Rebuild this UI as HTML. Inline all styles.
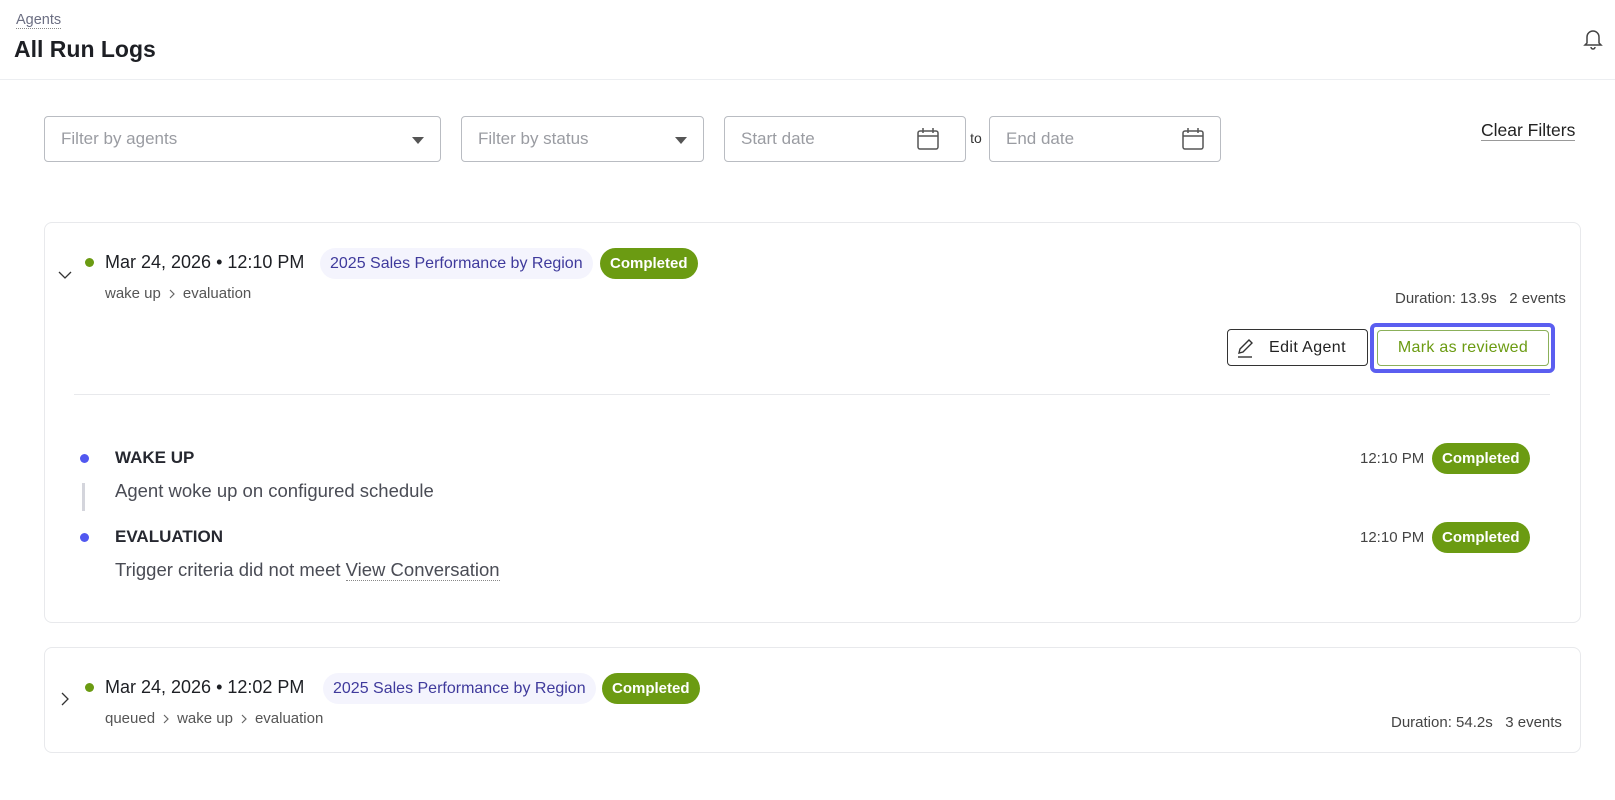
<!DOCTYPE html>
<html><head><meta charset="utf-8"><style>
*{box-sizing:border-box;margin:0;padding:0}
body{width:1615px;height:800px;background:#fff;font-family:"Liberation Sans",sans-serif;color:#222;position:relative;overflow:hidden}
.a{position:absolute}
.hdr{left:0;top:0;width:1615px;height:80px;border-bottom:1px solid #eceef1}
.inp{height:46px;border:1px solid #b9bcc2;border-radius:4px;top:116px;color:#9a9ca2;font-size:17px;padding:12px 16px}
.tri{position:absolute;right:16px;top:20px;width:0;height:0;border-left:6px solid transparent;border-right:6px solid transparent;border-top:7px solid #555}
.card{left:44px;width:1537px;border:1px solid #e8e9ec;border-radius:8px}
.pill{height:31px;border-radius:16px;padding:0 10px;line-height:31px;font-size:16px}
.tag{background:#f4f4fd;color:#3f3a9c}
.ok{background:#6b9b12;color:#fff;font-weight:bold;font-size:15px;padding:0 10px}
.sm{font-size:15px;color:#555}
.dot{width:9px;height:9px;border-radius:50%}
.chev{display:inline-block;margin:0 8px;vertical-align:middle}
</style></head><body>
<div class="a hdr"></div>
<div class="a" style="left:16px;top:12px;font-size:14.5px;color:#6b6e82;border-bottom:1px dotted #888;line-height:16px">Agents</div>
<div class="a" style="left:14px;top:36px;font-size:23px;font-weight:bold;color:#1d1f24">All Run Logs</div>
<svg class="a" style="left:1583px;top:28px" width="20" height="22" viewBox="0 0 20 22" fill="none" stroke="#444" stroke-width="1.5"><path d="M4 15V9a6 6 0 0 1 12 0v6l2 2H2z"/><path d="M8 19a2 2 0 0 0 4 0"/></svg>

<div class="a inp" style="left:44px;width:397px">Filter by agents<span class="tri"></span></div>
<div class="a inp" style="left:461px;width:243px">Filter by status<span class="tri"></span></div>
<div class="a inp" style="left:724px;width:242px">Start date
<svg style="position:absolute;right:25px;top:10px" width="24" height="24" viewBox="0 0 24 24" fill="none" stroke="#555" stroke-width="1.5"><rect x="2" y="4" width="20" height="18" rx="2"/><path d="M2 9h20M7 1v5M17 1v5"/></svg></div>
<div class="a" style="left:964px;top:130px;width:24px;text-align:center;font-size:14px;color:#333">to</div>
<div class="a inp" style="left:989px;width:232px">End date
<svg style="position:absolute;right:15px;top:10px" width="24" height="24" viewBox="0 0 24 24" fill="none" stroke="#555" stroke-width="1.5"><rect x="2" y="4" width="20" height="18" rx="2"/><path d="M2 9h20M7 1v5M17 1v5"/></svg></div>
<div class="a" style="left:1481px;top:120px;font-size:17.5px;color:#222;border-bottom:1px solid #999;line-height:20px">Clear Filters</div>

<div class="a card" style="top:222px;height:401px"></div>
<svg class="a" style="left:58px;top:270px" width="14" height="10" viewBox="0 0 14 10" fill="none" stroke="#333" stroke-width="1.3"><path d="M1 2l6 6 6-6"/></svg>
<div class="a dot" style="left:85px;top:258px;background:#6b9b12"></div>
<div class="a" style="left:105px;top:252px;font-size:18px;color:#1d1f24">Mar 24, 2026 • 12:10 PM</div>
<div class="a pill tag" style="left:320px;top:248px">2025 Sales Performance by Region</div>
<div class="a pill ok" style="left:600px;top:248px">Completed</div>
<div class="a sm" style="left:105px;top:285px">wake up<svg class="chev" width="6" height="10" viewBox="0 0 6 10" fill="none" stroke="#666" stroke-width="1.2"><path d="M1 1l4 4-4 4"/></svg>evaluation</div>
<div class="a sm" style="left:1395px;top:290px;color:#444;font-size:15px">Duration: 13.9s &nbsp;&nbsp;2 events</div>
<div class="a" style="left:1227px;top:329px;width:141px;height:37px;border:1px solid #333;border-radius:4px;font-size:16px;padding:9px 0 0 41px;color:#222;letter-spacing:.4px">Edit Agent</div>
<svg class="a" style="left:1236px;top:337px" width="22" height="22" viewBox="0 0 22 22" fill="none" stroke="#333" stroke-width="1.4"><path d="M3 16l1-4 9-9 3 3-9 9z"/><path d="M2 20h14"/></svg>
<div class="a" style="left:1370px;top:323px;width:185px;height:50px;border:4px solid #5b5ef0;border-radius:6px"></div>
<div class="a" style="left:1377px;top:330px;width:172px;height:36px;border:1px solid #8bb05a;border-radius:4px;font-size:16px;color:#6b9b12;text-align:center;line-height:34px;letter-spacing:.3px">Mark as reviewed</div>
<div class="a" style="left:74px;top:394px;width:1476px;height:1px;background:#e8e9ec"></div>

<div class="a dot" style="left:80px;top:454px;background:#5158f0"></div>
<div class="a" style="left:115px;top:448px;font-size:17px;font-weight:bold;color:#262830">WAKE UP</div>
<div class="a" style="left:82px;top:483px;width:3px;height:28px;background:#d4d5dc"></div>
<div class="a" style="left:115px;top:480px;font-size:18.5px;color:#4a4c55">Agent woke up on configured schedule</div>
<div class="a sm" style="left:1360px;top:450px;color:#444">12:10 PM</div>
<div class="a pill ok" style="left:1432px;top:443px">Completed</div>
<div class="a dot" style="left:80px;top:533px;background:#5158f0"></div>
<div class="a" style="left:115px;top:527px;font-size:17px;font-weight:bold;color:#262830">EVALUATION</div>
<div class="a" style="left:115px;top:559px;font-size:18.5px;color:#4a4c55">Trigger criteria did not meet <span style="border-bottom:1px dotted #888">View Conversation</span></div>
<div class="a sm" style="left:1360px;top:529px;color:#444">12:10 PM</div>
<div class="a pill ok" style="left:1432px;top:522px">Completed</div>

<div class="a card" style="top:647px;height:106px"></div>
<svg class="a" style="left:60px;top:692px" width="10" height="14" viewBox="0 0 10 14" fill="none" stroke="#333" stroke-width="1.3"><path d="M2 1l6 6-6 6"/></svg>
<div class="a dot" style="left:85px;top:683px;background:#6b9b12"></div>
<div class="a" style="left:105px;top:677px;font-size:18px;color:#1d1f24">Mar 24, 2026 • 12:02 PM</div>
<div class="a pill tag" style="left:323px;top:673px">2025 Sales Performance by Region</div>
<div class="a pill ok" style="left:602px;top:673px">Completed</div>
<div class="a sm" style="left:105px;top:710px">queued<svg class="chev" width="6" height="10" viewBox="0 0 6 10" fill="none" stroke="#666" stroke-width="1.2"><path d="M1 1l4 4-4 4"/></svg>wake up<svg class="chev" width="6" height="10" viewBox="0 0 6 10" fill="none" stroke="#666" stroke-width="1.2"><path d="M1 1l4 4-4 4"/></svg>evaluation</div>
<div class="a sm" style="left:1391px;top:714px;color:#444">Duration: 54.2s &nbsp;&nbsp;3 events</div>
</body></html>
